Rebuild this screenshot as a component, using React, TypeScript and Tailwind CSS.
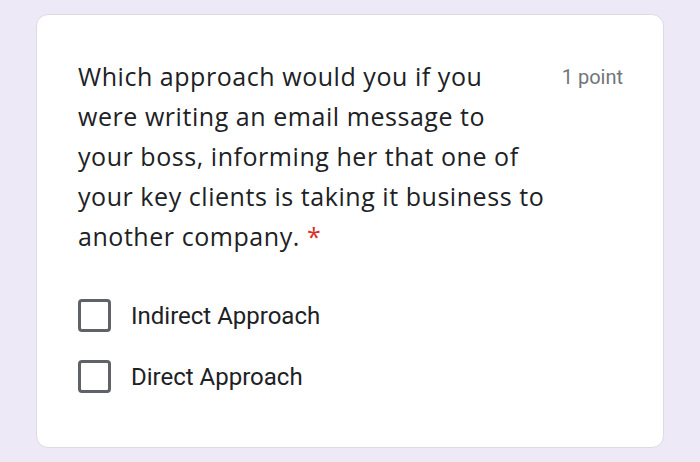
export default function App() {
  const options = ["Indirect Approach", "Direct Approach"];
  return (
    <div className="w-[700px] h-[462px] bg-[#ede9f6] pt-[14px] pl-[36px]" style={{ fontFamily: "Roboto, 'Liberation Sans', sans-serif" }}>
      <div className="w-[628px] h-[434px] bg-white rounded-[12px] border border-[#dadce0] pl-[41px] pr-[40px] pt-[41px]">
        <div className="flex justify-between items-start">
          <div className="text-[25px] leading-[40px] tracking-[0.55px] text-[#202124]" style={{ fontFamily: "'Open Sans', Roboto, sans-serif" }}>
            Which approach would you if you
            <br />
            were writing an email message to
            <br />
            your boss, informing her that one of
            <br />
            your key clients is taking it business to
            <br />
            another company. <span className="text-[#d93025]">*</span>
          </div>
          <div className="text-[20px] text-[#70757a] pt-[6px]">1 point</div>
        </div>
        <div className="mt-[43px] flex flex-col gap-[28px]">
          {options.map((o) => (
            <div key={o} className="flex items-center gap-[20px]">
              <div className="w-[33px] h-[33px] border-[3px] border-[#5f6368] rounded-[4px]" />
              <span className="text-[24px] leading-[32px] text-[#202124]">{o}</span>
            </div>
          ))}
        </div>
      </div>
    </div>
  );
}
